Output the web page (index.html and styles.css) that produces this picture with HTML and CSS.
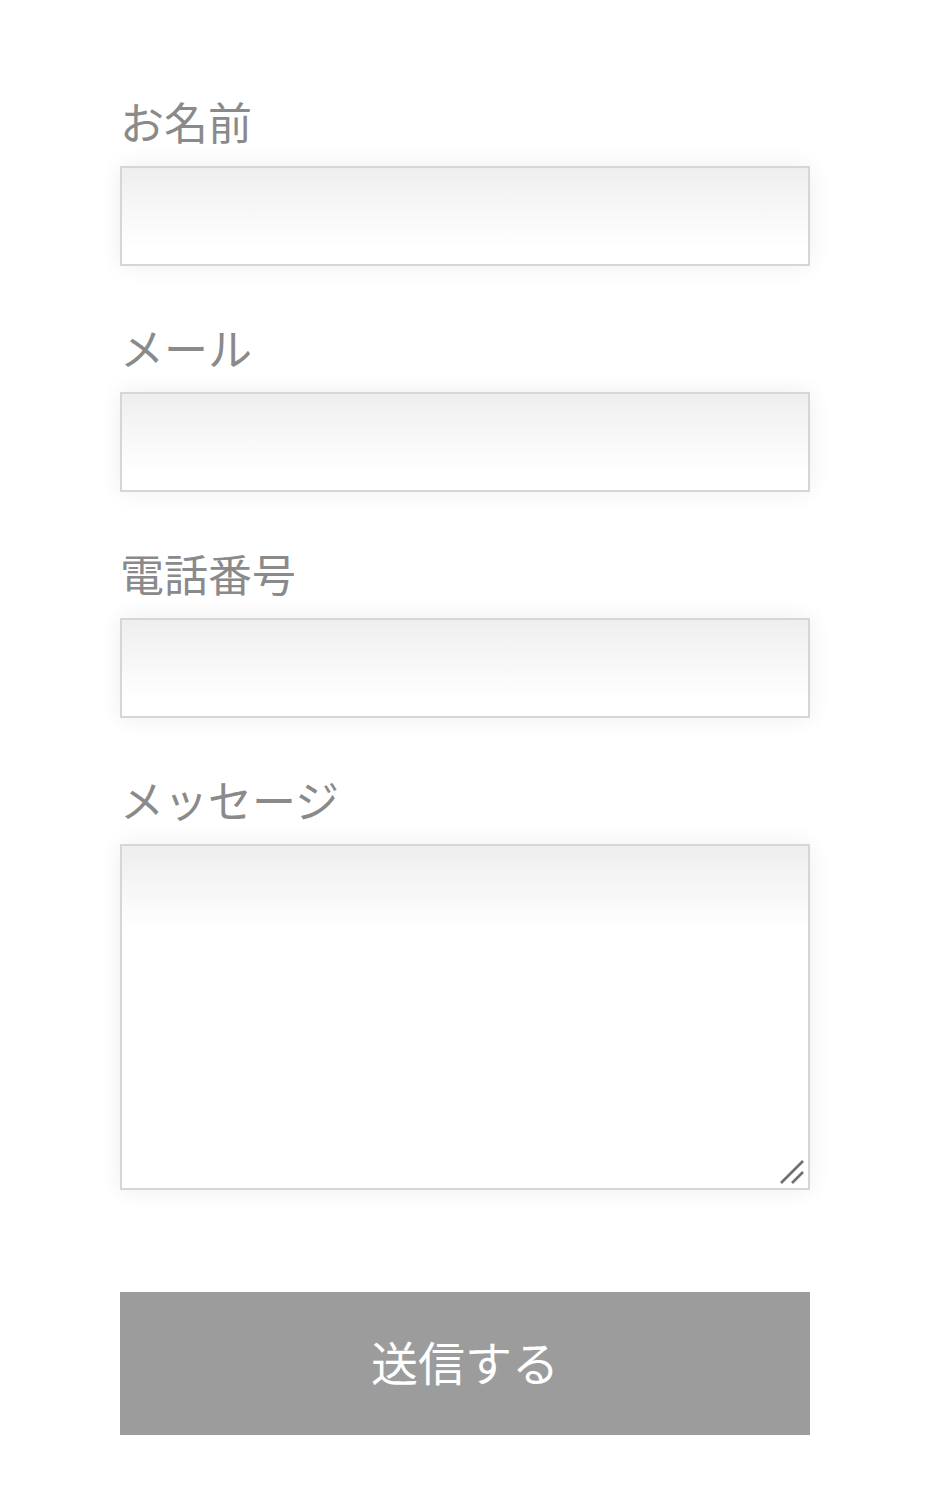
FILE: index.html
```html
<!DOCTYPE html>
<html>
  <head>
    <meta name="viewport" content="width=device-width, initial-scale=1" />
    <link rel="stylesheet" href="styles.css">
  </head>
  <body>
    <form class="contact">
      <label class="label" for="name">お名前</label>
      <input class="field" type="text" id="name" name="name">

      <label class="label" for="mail">メール</label>
      <input class="field" type="email" id="mail" name="mail">

      <label class="label" for="tel">電話番号</label>
      <input class="field" type="tel" id="tel" name="tel">

      <label class="label" for="msg">メッセージ</label>
      <div class="message-wrap">
        <textarea class="field message" id="msg" name="msg"></textarea>
        <svg class="grip" width="26" height="26" viewBox="0 0 26 26">
          <line x1="2" y1="24" x2="24" y2="2" stroke="#6f6f6f" stroke-width="2.6" />
          <line x1="13" y1="24" x2="24" y2="13" stroke="#6f6f6f" stroke-width="2.6" />
        </svg>
      </div>

      <button class="send" type="submit">送信する</button>
    </form>
  </body>
</html>
```

FILE: styles.css
```css
body {
  margin: 0;
  background: #fff;
  font-family: "Noto Sans CJK JP", "Noto Sans", sans-serif;
}

.contact {
  width: 690px;
  margin: 0 0 0 120px;
  padding-top: 90px;
  display: flex;
  flex-direction: column;
}

.label {
  font-size: 44px;
  line-height: 63px;
  color: #8a8a8a;
  margin-bottom: 13px;
}

.field {
  box-sizing: border-box;
  width: 100%;
  height: 100px;
  margin: 0 0 50px;
  border: 2px solid #d6d6d6;
  background: linear-gradient(to bottom, #eeeeee, #f3f3f3 20px, #ffffff 80px);
  box-shadow: 0 0 22px rgba(0, 0, 0, 0.07);
  font: inherit;
  font-size: 32px;
  padding: 8px 12px;
  outline: none;
  display: block;
}

.message-wrap {
  position: relative;
  margin-bottom: 102px;
}

.message {
  height: 346px;
  margin: 0;
  resize: none;
  background: linear-gradient(to bottom, #eeeeee, #f3f3f3 25px, #ffffff 85px);
}

.grip {
  position: absolute;
  right: 5px;
  bottom: 5px;
}

.send {
  height: 143px;
  padding: 0 0 6px;
  border: none;
  background: #9c9c9c;
  color: #fff;
  font-family: inherit;
  font-size: 47px;
  cursor: pointer;
}
```
